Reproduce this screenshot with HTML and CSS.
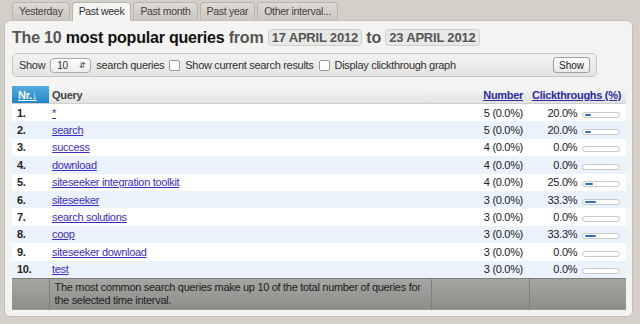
FILE: index.html
```html
<!DOCTYPE html>
<html lang="en">
  <head>
    <meta charset="UTF-8" />
    <title>Popular queries</title>
    <link rel="stylesheet" href="styles.css">
  </head>
  <body>
    <div class="tabs">
      <a class="tab">Yesterday</a>
      <a class="tab active">Past week</a>
      <a class="tab">Past month</a>
      <a class="tab">Past year</a>
      <a class="tab">Other interval...</a>
    </div>

    <div class="panel">
      <h1 class="title">
        <span class="dim">The 10</span> most popular queries <span class="dim">from</span>
        <span class="date">17 APRIL 2012</span> <span class="dim">to</span>
        <span class="date">23 APRIL 2012</span>
      </h1>

      <div class="options">
        <span>Show</span>
        <span class="select">10 <span class="arrows">&#8693;</span></span>
        <span>search queries</span>
        <span class="check"></span>
        <span>Show current search results</span>
        <span class="check"></span>
        <span>Display clickthrough graph</span>
        <button class="show-btn">Show</button>
      </div>

      <table class="queries">
        <colgroup>
          <col class="col-nr" />
          <col />
          <col class="col-num" />
          <col class="col-ct" />
        </colgroup>
        <thead>
          <tr>
            <th class="col-nr"><a>Nr.&darr;</a></th>
            <th class="col-query">Query</th>
            <th class="col-num"><a>Number</a></th>
            <th class="col-ct"><a>Clickthroughs (%)</a></th>
          </tr>
        </thead>
        <tbody>
          <tr><td class="col-nr">1.</td><td><a>*</a></td><td class="col-num">5 (0.0%)</td><td class="col-ct">20.0% <span class="bar"><span class="fill" style="width: 20%"></span></span></td></tr>
          <tr><td class="col-nr">2.</td><td><a>search</a></td><td class="col-num">5 (0.0%)</td><td class="col-ct">20.0% <span class="bar"><span class="fill" style="width: 20%"></span></span></td></tr>
          <tr><td class="col-nr">3.</td><td><a>success </a></td><td class="col-num">4 (0.0%)</td><td class="col-ct">0.0% <span class="bar"></span></td></tr>
          <tr><td class="col-nr">4.</td><td><a>download </a></td><td class="col-num">4 (0.0%)</td><td class="col-ct">0.0% <span class="bar"></span></td></tr>
          <tr><td class="col-nr">5.</td><td><a>siteseeker integration toolkit</a></td><td class="col-num">4 (0.0%)</td><td class="col-ct">25.0% <span class="bar"><span class="fill" style="width: 25%"></span></span></td></tr>
          <tr><td class="col-nr">6.</td><td><a>siteseeker </a></td><td class="col-num">3 (0.0%)</td><td class="col-ct">33.3% <span class="bar"><span class="fill" style="width: 33.3%"></span></span></td></tr>
          <tr><td class="col-nr">7.</td><td><a>search solutions </a></td><td class="col-num">3 (0.0%)</td><td class="col-ct">0.0% <span class="bar"></span></td></tr>
          <tr><td class="col-nr">8.</td><td><a>coop </a></td><td class="col-num">3 (0.0%)</td><td class="col-ct">33.3% <span class="bar"><span class="fill" style="width: 33.3%"></span></span></td></tr>
          <tr><td class="col-nr">9.</td><td><a>siteseeker download </a></td><td class="col-num">3 (0.0%)</td><td class="col-ct">0.0% <span class="bar"></span></td></tr>
          <tr><td class="col-nr">10.</td><td><a>test </a></td><td class="col-num">3 (0.0%)</td><td class="col-ct">0.0% <span class="bar"></span></td></tr>
        </tbody>
        <tfoot>
          <tr>
            <td></td>
            <td>The most common search queries make up 10 of the total number of queries for the selected time interval.</td>
            <td></td>
            <td></td>
          </tr>
        </tfoot>
      </table>
    </div>
  </body>
</html>
```

FILE: styles.css
```css
/* General styling */
body {
  margin: 0;
  padding: 2px 7px 0 4px;
  background-color: #d5cfc9;
  font-family: "Liberation Sans", Arial, sans-serif;
  font-size: 11px;
  color: #333;
}

/* Tabs */
.tabs {
  display: flex;
  gap: 2px;
  margin-left: 8px;
  height: 18px;
}

.tab {
  box-sizing: border-box;
  height: 18px;
  line-height: 17px;
  padding: 0 6px;
  border: 1px solid #b8b3ad;
  border-bottom: none;
  border-radius: 4px 4px 0 0;
  background: linear-gradient(#dedad5, #cbc6c0);
  color: #444;
  font-size: 10.5px;
  letter-spacing: -0.3px;
}

.tab.active {
  height: 19px;
  background: #f4f4f2;
  color: #333;
  position: relative;
  z-index: 1;
}

/* Panel */
.panel {
  width: 629px;
  height: 297px;
  box-sizing: border-box;
  padding: 6px 6px 0 7px;
  border: 1px solid #c4c0bb;
  border-radius: 6px;
  background-color: #f3f3f1;
}

.title {
  margin: 0;
  height: 22px;
  line-height: 22px;
  font-size: 16px;
  font-weight: bold;
  color: #111;
  letter-spacing: -0.2px;
  white-space: nowrap;
}

.title .dim {
  color: #555;
}

.date {
  display: inline-block;
  line-height: 15px;
  padding: 0 3px;
  border: 1px solid #cfcfcc;
  border-radius: 4px;
  background-color: #e8e8e6;
  color: #555;
  font-size: 13px;
  vertical-align: 1px;
}

/* Options bar */
.options {
  box-sizing: border-box;
  width: 585px;
  height: 24px;
  margin-top: 4px;
  padding: 0 6px;
  display: flex;
  align-items: center;
  gap: 5px;
  border: 1px solid #c6c6c3;
  border-radius: 5px;
  background: linear-gradient(#f2f2f0, #e3e3e1);
  letter-spacing: -0.3px;
}

.select {
  box-sizing: border-box;
  width: 41px;
  height: 15px;
  line-height: 13px;
  padding-left: 6px;
  border: 1px solid #aaa;
  border-radius: 4px;
  background: linear-gradient(#fff, #ececec);
  position: relative;
  font-size: 10px;
}

.arrows {
  position: absolute;
  right: 5px;
  top: 0;
  font-size: 8px;
  color: #555;
}

.check {
  width: 9px;
  height: 9px;
  border: 1px solid #999;
  border-radius: 2px;
  background: #fff;
}

.show-btn {
  margin-left: auto;
  height: 16px;
  padding: 0 5px;
  border: 1px solid #a0a0a0;
  border-radius: 3px;
  background: linear-gradient(#fff, #e8e8e8);
  font-family: inherit;
  font-size: 10px;
  color: #222;
}

/* Table */
.queries {
  width: 614px;
  margin-top: 9px;
  table-layout: fixed;
  border-collapse: collapse;
  background-color: #fff;
  letter-spacing: -0.3px;
  white-space: nowrap;
}

.queries th {
  height: 17px;
  padding: 0 3px;
  background: linear-gradient(#f7f7f7, #e2e2e2);
  border-bottom: 1px solid #cfcfcf;
  font-weight: bold;
  color: #444;
  text-align: left;
}

.queries th a {
  color: #2d2d9f;
  text-decoration: underline;
}

.queries th.col-nr {
  background: linear-gradient(#52acdf, #2384c4);
  padding-left: 6px;
}

.queries th.col-nr a {
  color: #fff;
}

.queries td {
  height: 17.4px;
  padding: 0 3px;
  color: #222;
}

.queries tbody tr:nth-child(even) td {
  background-color: #eaf2fc;
}

.queries td a {
  color: #3a2fc0;
  text-decoration: underline;
}

col.col-nr {
  width: 37px;
}

col.col-num {
  width: 98px;
}

col.col-ct {
  width: 97px;
}

.queries td.col-nr {
  padding-left: 5px;
  font-weight: bold;
}

.queries .col-num,
.queries .col-ct {
  text-align: right;
  padding-right: 6px;
}

.bar {
  display: inline-block;
  box-sizing: border-box;
  width: 38px;
  height: 6px;
  margin-left: 2px;
  padding: 1px 2px;
  border: 1px solid #c9c9c9;
  border-radius: 3px;
  background: #fff;
  vertical-align: -1px;
  text-align: left;
}

.fill {
  display: block;
  height: 2px;
  border-radius: 2px;
  background-color: #2f6dbf;
}

.queries tfoot td {
  height: 31px;
  padding: 0 5px;
  background: linear-gradient(#a5a5a2, #8d8d8a);
  border-top: 1px solid #7e7e7c;
  border-left: 1px solid #7e7e7c;
  color: #1e1e1e;
  line-height: 13px;
  white-space: normal;
  vertical-align: middle;
}

.queries tfoot td:first-child {
  border-left: none;
}
```
